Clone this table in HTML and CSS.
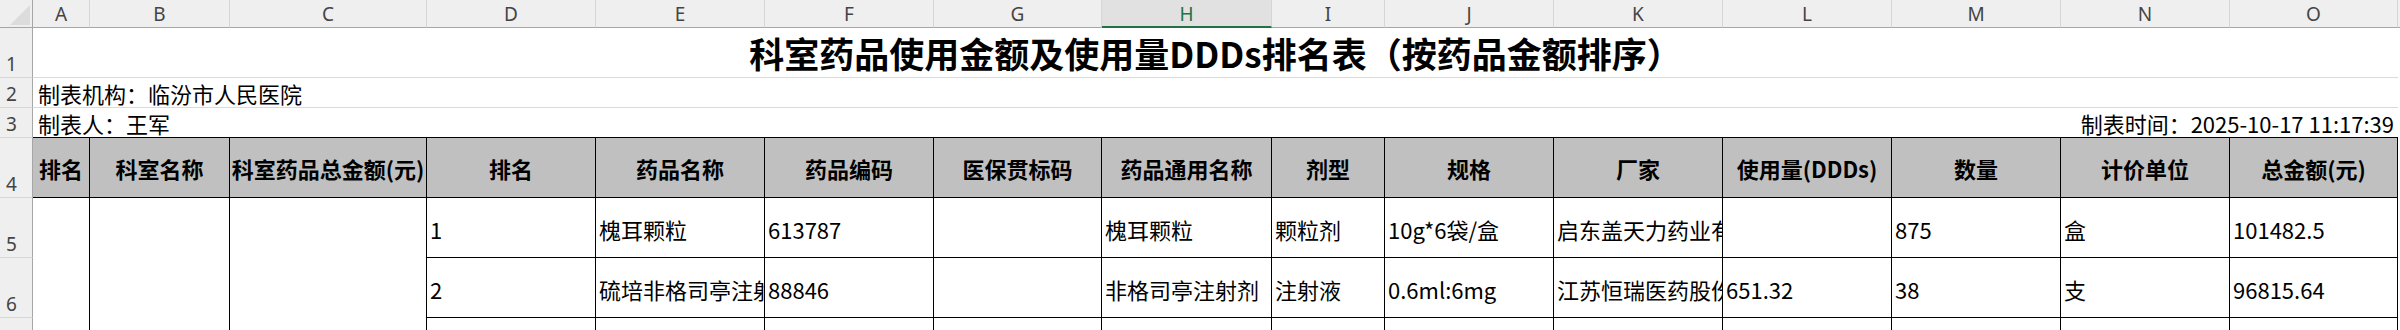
FILE: index.html
```html
<!DOCTYPE html>
<html lang="zh-CN">
<head>
<meta charset="utf-8">
<title>科室药品使用金额及使用量DDDs排名表</title>
<link rel="stylesheet" href="styles.css">
</head>
<body>
<div class="sheet">
  <div class="corner"><svg width="33" height="28" viewBox="0 0 33 28"><polygon points="30,5 30,25 10,25" fill="#dcdcdc"/></svg></div>
  <div class="ch">A</div>
  <div class="ch">B</div>
  <div class="ch">C</div>
  <div class="ch">D</div>
  <div class="ch">E</div>
  <div class="ch">F</div>
  <div class="ch">G</div>
  <div class="ch sel">H</div>
  <div class="ch">I</div>
  <div class="ch">J</div>
  <div class="ch">K</div>
  <div class="ch">L</div>
  <div class="ch">M</div>
  <div class="ch">N</div>
  <div class="ch">O</div>
  <div class="ch fill"></div>

  <div class="rh">1</div>
  <div class="title">科室药品使用金额及使用量DDDs排名表（按药品金额排序）</div>

  <div class="rh">2</div>
  <div class="info">制表机构：临汾市人民医院</div>

  <div class="rh">3</div>
  <div class="info last"><span>制表人：王军</span><span>制表时间：2025-10-17 11:17:39</span></div>

  <div class="rh">4</div>
  <div class="th">排名</div>
  <div class="th">科室名称</div>
  <div class="th">科室药品总金额(元)</div>
  <div class="th">排名</div>
  <div class="th">药品名称</div>
  <div class="th">药品编码</div>
  <div class="th">医保贯标码</div>
  <div class="th">药品通用名称</div>
  <div class="th">剂型</div>
  <div class="th">规格</div>
  <div class="th">厂家</div>
  <div class="th">使用量(DDDs)</div>
  <div class="th">数量</div>
  <div class="th">计价单位</div>
  <div class="th">总金额(元)</div>

  <div class="rh">5</div>
  <div class="td merged"></div>
  <div class="td merged"></div>
  <div class="td merged"></div>
  <div class="td">1</div>
  <div class="td">槐耳颗粒</div>
  <div class="td">613787</div>
  <div class="td"></div>
  <div class="td">槐耳颗粒</div>
  <div class="td">颗粒剂</div>
  <div class="td">10g*6袋/盒</div>
  <div class="td">启东盖天力药业有限公司</div>
  <div class="td"></div>
  <div class="td">875</div>
  <div class="td">盒</div>
  <div class="td">101482.5</div>

  <div class="rh">6</div>
  <div class="td">2</div>
  <div class="td">硫培非格司亭注射剂</div>
  <div class="td">88846</div>
  <div class="td"></div>
  <div class="td">非格司亭注射剂</div>
  <div class="td">注射液</div>
  <div class="td">0.6ml:6mg</div>
  <div class="td">江苏恒瑞医药股份有限公司</div>
  <div class="td">651.32</div>
  <div class="td">38</div>
  <div class="td">支</div>
  <div class="td">96815.64</div>

  <div class="rh cut"></div>
  <div class="td cut"></div>
  <div class="td cut"></div>
  <div class="td cut"></div>
  <div class="td cut"></div>
  <div class="td cut"></div>
  <div class="td cut"></div>
  <div class="td cut"></div>
  <div class="td cut"></div>
  <div class="td cut"></div>
  <div class="td cut"></div>
  <div class="td cut"></div>
  <div class="td cut"></div>
</div>
</body>
</html>
```

FILE: styles.css
```css
* { box-sizing: border-box; }

html, body {
  margin: 0;
  padding: 0;
  background: #ffffff;
  overflow: hidden;
}

body {
  font-family: "Noto Sans CJK SC", "Liberation Sans", sans-serif;
  color: #000;
}

.sheet {
  display: grid;
  width: 2400px;
  height: 330px;
  overflow: hidden;
  grid-template-columns: 33px 57px 140px 197px 169px 169px 169px 168px 170px 113px 169px 169px 169px 169px 169px 168px 1fr;
  grid-template-rows: 28px 50px 30px 30px 60px 60px 60px 12px;
}

.corner {
  background: #efefef;
  border-right: 1px solid #a6a6a6;
  border-bottom: 1px solid #a6a6a6;
}
.corner svg { display: block; }

.ch {
  background: #efefef;
  border-right: 1px solid #d6d6d6;
  border-bottom: 1px solid #a6a6a6;
  display: flex;
  align-items: center;
  justify-content: center;
  font-family: "Noto Sans", "Liberation Sans", sans-serif;
  font-size: 19px;
  line-height: 1;
  color: #444;
  padding-top: 2px;
}
.ch.sel {
  background: #e1e1e1;
  color: #217346;
  border-bottom: 2px solid #217346;
}
.ch.fill { border-right: none; }

.rh {
  grid-column: 1;
  background: #efefef;
  border-right: 1px solid #a6a6a6;
  border-bottom: 1px solid #d6d6d6;
  display: flex;
  align-items: flex-end;
  justify-content: center;
  padding-right: 9px;
  padding-bottom: 3px;
  font-family: "Noto Sans", "Liberation Sans", sans-serif;
  font-size: 19px;
  line-height: 20px;
  color: #444;
}

.title {
  grid-column: 2 / 17;
  border-bottom: 1px solid #dadada;
  display: flex;
  align-items: center;
  justify-content: center;
  font-size: 35px;
  font-weight: 700;
  line-height: 1;
  white-space: nowrap;
}

.info {
  grid-column: 2 / 17;
  border-bottom: 1px solid #dadada;
  display: flex;
  align-items: center;
  padding: 0 4px 0 5px;
  font-size: 22px;
  line-height: 1;
  white-space: nowrap;
}
.info.last {
  justify-content: space-between;
  border-bottom: 1px solid #000;
}

.th {
  background: #c0c0c0;
  border-right: 1px solid #000;
  border-bottom: 1px solid #000;
  display: flex;
  align-items: center;
  justify-content: center;
  font-size: 22px;
  font-weight: 700;
  line-height: 1;
  white-space: nowrap;
  overflow: hidden;
}

.td {
  border-right: 1px solid #000;
  border-bottom: 1px solid #000;
  display: flex;
  align-items: center;
  padding: 3px 0 0 3px;
  font-size: 22px;
  line-height: 1;
  white-space: nowrap;
  overflow: hidden;
}
.td.merged {
  grid-row: span 3;
  border-bottom: none;
}
.td.cut,
.rh.cut {
  border-bottom: none;
}
```
